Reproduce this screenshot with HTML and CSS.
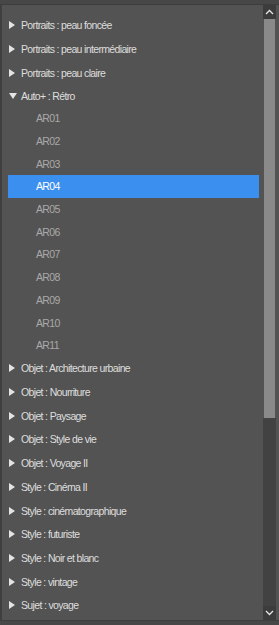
FILE: index.html
```html
<!DOCTYPE html>
<html lang="fr">
<head>
    <meta charset="UTF-8">
    <meta name="viewport" content="width=device-width, initial-scale=1.0">
    <title>Préréglages</title>
    <link rel="stylesheet" href="styles.css">
</head>
<body>
    <div class="panel">
        <ul class="tree">
            <li class="group"><span class="arrow"></span>Portraits : peau foncée</li>
            <li class="group"><span class="arrow"></span>Portraits : peau intermédiaire</li>
            <li class="group"><span class="arrow"></span>Portraits : peau claire</li>
            <li class="group open"><span class="arrow"></span>Auto+ : Rétro</li>
            <li class="item">AR01</li>
            <li class="item">AR02</li>
            <li class="item">AR03</li>
            <li class="item selected">AR04</li>
            <li class="item">AR05</li>
            <li class="item">AR06</li>
            <li class="item">AR07</li>
            <li class="item">AR08</li>
            <li class="item">AR09</li>
            <li class="item">AR10</li>
            <li class="item">AR11</li>
            <li class="group low"><span class="arrow"></span>Objet : Architecture urbaine</li>
            <li class="group low"><span class="arrow"></span>Objet : Nourriture</li>
            <li class="group low"><span class="arrow"></span>Objet : Paysage</li>
            <li class="group low"><span class="arrow"></span>Objet : Style de vie</li>
            <li class="group low"><span class="arrow"></span>Objet : Voyage II</li>
            <li class="group low"><span class="arrow"></span>Style : Cinéma II</li>
            <li class="group low"><span class="arrow"></span>Style : cinématographique</li>
            <li class="group low"><span class="arrow"></span>Style : futuriste</li>
            <li class="group low"><span class="arrow"></span>Style : Noir et blanc</li>
            <li class="group low"><span class="arrow"></span>Style : vintage</li>
            <li class="group low"><span class="arrow"></span>Sujet : voyage</li>
        </ul>
        <div class="scrollbar">
            <div class="btn">
                <svg width="9" height="6" viewBox="0 0 9 6"><path d="M1 5 L4.5 1.5 L8 5" fill="none" stroke="#e6e6e6" stroke-width="1.3"/></svg>
            </div>
            <div class="thumb"></div>
            <div class="track"></div>
            <div class="btn">
                <svg width="9" height="6" viewBox="0 0 9 6"><path d="M1 1 L4.5 4.5 L8 1" fill="none" stroke="#e6e6e6" stroke-width="1.3"/></svg>
            </div>
        </div>
    </div>
</body>
</html>
```

FILE: styles.css
```css
html, body {
    margin: 0;
    padding: 0;
    background: #474747;
    overflow: hidden;
}
body {
    font-family: "Liberation Sans", Arial, sans-serif;
    font-size: 10.5px;
    letter-spacing: -0.65px;
    color: #dedede;
}
.panel {
    margin-top: 4px;
    height: 615px;
    display: flex;
    background: #535353;
    border-top: 1px solid #3d3d3d;
    border-bottom: 1px solid #3d3d3d;
    border-left: 2px solid #3f3f3f;
}
.tree {
    list-style: none;
    margin: 0;
    padding: 8px 0 0 6px;
    flex: 1;
    overflow: hidden;
}
.tree li {
    display: flex;
    align-items: center;
    white-space: nowrap;
}
.group {
    height: 24px;
    padding-left: 1px;
}
.group.open {
    height: 22px;
}
.group.low {
    height: 23.7px;
}
.arrow {
    width: 0;
    height: 0;
    margin-right: 6px;
    border-top: 4px solid transparent;
    border-bottom: 4px solid transparent;
    border-left: 6px solid #e4e4e4;
}
.open .arrow {
    border-left: 4px solid transparent;
    border-right: 4px solid transparent;
    border-top: 6px solid #e4e4e4;
    border-bottom: 0;
    margin-right: 4px;
}
.item {
    height: 22.7px;
    padding-left: 28px;
    color: #a9a9a9;
}
.item.selected {
    background: #3b8fef;
    color: #ffffff;
}
.scrollbar {
    width: 13px;
    margin: 0 3px 0 4px;
    display: flex;
    flex-direction: column;
}
.btn {
    height: 14px;
    background: #3c3c3c;
    display: flex;
    align-items: center;
    justify-content: center;
}
.thumb {
    height: 399px;
    margin: 0 1px;
    background: #8a8a8a;
}
.track {
    flex: 1;
    background: #424242;
}
```
